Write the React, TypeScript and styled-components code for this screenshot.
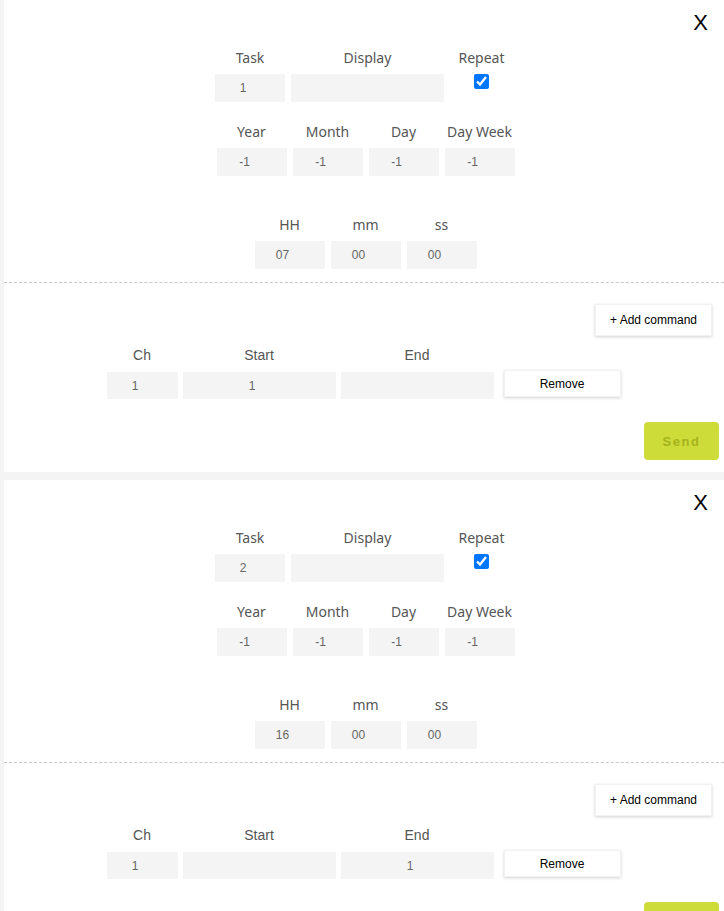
import React, { useState } from 'react';
import styled, { createGlobalStyle } from 'styled-components';

const GlobalStyle = createGlobalStyle`
	html, body {
		margin: 0;
		padding: 0;
		background: #f4f4f4;
	}
	body {
		padding-left: 4px;
		font-family: 'Liberation Sans', Arial, sans-serif;
	}
`;

const Card = styled.div`
	background: #fff;
	width: 720px;
	padding: 10px 0 12px;
	margin-bottom: 8px;
	box-sizing: border-box;
`;

const Header = styled.div`
	display: flex;
	justify-content: flex-end;
	padding-right: 16px;
`;

const Close = styled.span`
	font-family: 'Liberation Sans', Arial, sans-serif;
	font-size: 22px;
	line-height: 26px;
	color: #000;
	cursor: pointer;
`;

const Schedule = styled.div`
	margin-top: 14px;
	padding-bottom: 13px;
	display: flex;
	flex-direction: column;
	align-items: center;
	gap: 22px;
`;

const Row = styled.div<{ $spaced?: boolean; $shift?: number }>`
	display: flex;
	align-items: flex-start;
	justify-content: center;
	gap: 6px;
	margin-top: ${(p) => (p.$spaced ? '19px' : '0')};
	padding-left: ${(p) => p.$shift ?? 0}px;
`;

const Field = styled.div<{ $w: number; $gap?: number }>`
	width: ${(p) => p.$w}px;
	display: flex;
	flex-direction: column;
	align-items: center;
	gap: ${(p) => p.$gap ?? 8}px;
`;

const Label = styled.label<{ $plain?: boolean }>`
	font-family: ${(p) => (p.$plain ? "'Liberation Sans', Arial" : "'Noto Sans', 'Open Sans'")}, sans-serif;
	font-size: 14px;
	line-height: 16px;
	color: #555;
	white-space: nowrap;
`;

const Input = styled.input<{ $h?: number }>`
	width: 100%;
	height: ${(p) => p.$h ?? 28}px;
	box-sizing: border-box;
	border: none;
	outline: none;
	background: #f4f4f4;
	padding: 0 14px 0 0;
	text-align: center;
	font-family: 'Liberation Sans', Arial, sans-serif;
	font-size: 12px;
	color: #666;
`;

const Check = styled.input`
	width: 15px;
	height: 15px;
	margin: 0;
	accent-color: #0075ff;
`;

const Commands = styled.div`
	border-top: 1px dashed #c8c8c8;
	padding-top: 21px;
	display: flex;
	flex-direction: column;
`;

const Toolbar = styled.div`
	display: flex;
	justify-content: flex-end;
	padding-right: 12px;
`;

const WhiteButton = styled.button<{ $h: number }>`
	width: 117px;
	height: ${(p) => p.$h}px;
	background: #fff;
	border: 1px solid #f2f2f2;
	box-shadow: 0 1px 3px rgba(0, 0, 0, 0.18);
	font-family: 'Liberation Sans', Arial, sans-serif;
	font-size: 12px;
	color: #000;
	cursor: pointer;
	padding: 0;
`;

const CommandRow = styled.div`
	margin-top: 11px;
	display: flex;
	justify-content: center;
	align-items: flex-end;
	gap: 5px;
	padding-right: 1px;
`;

const RemoveWrap = styled.div`
	margin-left: 5px;
	margin-bottom: 2px;
`;

const Footer = styled.div`
	margin-top: 23px;
	display: flex;
	justify-content: flex-end;
	padding-right: 5px;
`;

const Send = styled.button`
	width: 75px;
	height: 38px;
	border: none;
	border-radius: 4px;
	background: #cddc39;
	color: #a6b31c;
	font-family: 'Liberation Sans', Arial, sans-serif;
	font-weight: bold;
	font-size: 13px;
	letter-spacing: 1.5px;
	cursor: pointer;
`;

type Cmd = { ch: string; start: string; end: string };

type Task = {
	id: string;
	hh: string;
	commands: Cmd[];
};

const TASKS: Task[] = [
	{ id: '1', hh: '07', commands: [{ ch: '1', start: '1', end: '' }] },
	{ id: '2', hh: '16', commands: [{ ch: '1', start: '', end: '1' }] },
];

const TaskCard: React.FC<{ task: Task }> = ({ task }) => {
	const [repeat, setRepeat] = useState(true);

	return (
		<Card>
			<Header>
				<Close>X</Close>
			</Header>
			<Schedule>
				<Row>
					<Field $w={70}>
						<Label>Task</Label>
						<Input defaultValue={task.id} />
					</Field>
					<Field $w={153}>
						<Label>Display</Label>
						<Input defaultValue="" />
					</Field>
					<Field $w={63}>
						<Label>Repeat</Label>
						<Check type="checkbox" checked={repeat} onChange={() => setRepeat(!repeat)} />
					</Field>
				</Row>
				<Row $shift={3}>
					{['Year', 'Month', 'Day', 'Day Week'].map((l) => (
						<Field $w={70} key={l}>
							<Label>{l}</Label>
							<Input defaultValue="-1" />
						</Field>
					))}
				</Row>
				<Row $spaced $shift={3}>
					{[
						['HH', task.hh],
						['mm', '00'],
						['ss', '00'],
					].map(([l, v]) => (
						<Field $w={70} key={l}>
							<Label>{l}</Label>
							<Input defaultValue={v} />
						</Field>
					))}
				</Row>
			</Schedule>
			<Commands>
				<Toolbar>
					<WhiteButton $h={32}>+ Add command</WhiteButton>
				</Toolbar>
				{task.commands.map((c, i) => (
					<CommandRow key={i}>
						<Field $w={71} $gap={9}>
							<Label $plain>Ch</Label>
							<Input $h={27} defaultValue={c.ch} />
						</Field>
						<Field $w={153} $gap={9}>
							<Label $plain>Start</Label>
							<Input $h={27} defaultValue={c.start} />
						</Field>
						<Field $w={153} $gap={9}>
							<Label $plain>End</Label>
							<Input $h={27} defaultValue={c.end} />
						</Field>
						<RemoveWrap>
							<WhiteButton $h={27}>Remove</WhiteButton>
						</RemoveWrap>
					</CommandRow>
				))}
				<Footer>
					<Send>Send</Send>
				</Footer>
			</Commands>
		</Card>
	);
};

export default function App() {
	return (
		<>
			<GlobalStyle />
			{TASKS.map((t) => (
				<TaskCard key={t.id} task={t} />
			))}
		</>
	);
}
